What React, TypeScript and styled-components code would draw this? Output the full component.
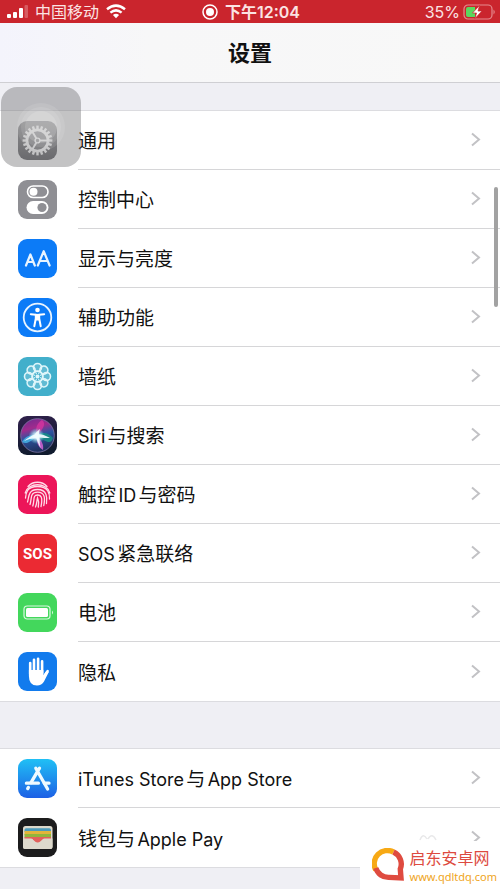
import React from "react";
import styled, { createGlobalStyle } from "styled-components";

const GlobalStyle = createGlobalStyle`
  * { box-sizing: border-box; }
  body {
    margin: 0;
    background: #efeff4;
    color: #111;
    font-family: Inter, "Noto Sans CJK SC", sans-serif;
  }
`;

const Page = styled.div`
  position: relative;
  min-height: 100vh;
  overflow: hidden;
`;

const StatusBar = styled.header`
  display: grid;
  grid-template-columns: 1fr auto 1fr;
  align-items: center;
  height: 23px;
  padding: 0 4px 0 6px;
  background: #ca252d;
  color: #fbe3e3;
  font-size: 16px;
  line-height: 22px;
`;

const StatusGroup = styled.div<{ $end?: boolean; $strong?: boolean }>`
  display: flex;
  align-items: center;
  justify-content: ${(p) => (p.$end ? "flex-end" : "flex-start")};
  gap: ${(p) => (p.$end ? 3 : 7)}px;
  font-weight: ${(p) => (p.$strong ? 600 : 400)};
  white-space: nowrap;
`;

const NavBar = styled.div`
  display: flex;
  align-items: center;
  justify-content: center;
  height: 60px;
  border-bottom: 1px solid #cfcfd3;
  background: linear-gradient(90deg, #f4f4fc, #f7f7f8 30%, #f8f8f8);
`;

const Title = styled.h1`
  margin: 0;
  font-size: 22px;
  line-height: 30px;
  font-weight: 600;
`;

const Group = styled.ul<{ $first?: boolean }>`
  margin: ${(p) => (p.$first ? 28 : 48)}px 0 0;
  padding: 0;
  list-style: none;
  background: #fff;
  box-shadow: 0 -1px #dcdce0, 0 1px #dcdce0;
`;

const Row = styled.a`
  display: flex;
  align-items: center;
  height: 59px;
  padding-left: 18px;
  gap: 21px;
  color: inherit;
  text-decoration: none;
`;

const RowBody = styled.span<{ $last?: boolean }>`
  display: flex;
  flex: 1;
  align-items: center;
  justify-content: space-between;
  height: 59px;
  padding-right: 19px;
  border-bottom: ${(p) => (p.$last ? "0" : "1px solid #d6d6d8")};
`;

const Label = styled.span`
  padding-top: 4px;
  font-size: 19px;
  line-height: 28px;
  white-space: nowrap;
  text-autospace: normal;
`;

const Latin = styled.span`
  font-size: 18px;
`;

const AssistiveTouch = styled.button`
  position: absolute;
  top: 87px;
  left: 1px;
  width: 80px;
  height: 80px;
  padding: 0;
  border: 0;
  border-radius: 16px;
  background: rgba(105, 105, 108, 0.4);
`;

const ScrollThumb = styled.div`
  position: absolute;
  top: 187px;
  right: 2px;
  width: 4px;
  height: 120px;
  border-radius: 2px;
  background: #a2a2a2;
`;

const FaintMark = styled.svg`
  position: absolute;
  right: 62px;
  bottom: 48px;
`;

const Brand = styled.a`
  position: absolute;
  right: 0;
  bottom: 0;
  display: flex;
  align-items: center;
  gap: 5px;
  height: 48px;
  padding: 0 3px 0 12px;
  border-top-left-radius: 4px;
  background: #fff;
  text-decoration: none;
`;

const BrandText = styled.span`
  display: flex;
  flex-direction: column;
`;

const BrandName = styled.span`
  color: #dd4a40;
  font-family: "Noto Sans CJK SC", sans-serif;
  font-size: 16px;
  line-height: 24px;
`;

const BrandUrl = styled.span`
  color: #efa51c;
  font-family: "Noto Sans", sans-serif;
  font-size: 11px;
  line-height: 16px;
`;

const AppIcon = styled.svg`
  display: block;
  flex: none;
  width: 39px;
  height: 39px;
`;

type IconProps = { fill: string; children?: React.ReactNode };

const Tile = ({ fill, children }: IconProps) => (
  <AppIcon viewBox="0 0 39 39" aria-hidden="true">
    <rect width="39" height="39" rx="9" fill={fill} />
    {children}
  </AppIcon>
);

const steps = (n: number) => Array.from({ length: n }, (_, i) => (i * 360) / n);

const GearIcon = () => (
  <Tile fill="url(#gear)">
    <defs>
      <linearGradient id="gear" x2="0" y2="1">
        <stop stopColor="#a2a2a4" />
        <stop offset="1" stopColor="#6c6c70" />
      </linearGradient>
    </defs>
    <g stroke="#fff" fill="none">
      <circle cx="19.5" cy="19.5" r="10.6" strokeWidth="2.8" />
      <circle cx="19.5" cy="19.5" r="2.4" strokeWidth="1.4" />
      {steps(20).map((a) => (
        <path key={a} d="M19.5 8.5V4.6" strokeWidth="2.4" transform={`rotate(${a} 19.5 19.5)`} />
      ))}
      {[90, 210, 330].map((a) => (
        <path key={a} d="M19.5 17V9" strokeWidth="1.9" transform={`rotate(${a} 19.5 19.5)`} />
      ))}
    </g>
  </Tile>
);

const ControlIcon = () => (
  <Tile fill="#8f8f94">
    <rect x="9.5" y="6" width="20.5" height="11.5" rx="5.75" fill="none" stroke="#fff" strokeWidth="1.6" />
    <circle cx="15.5" cy="11.7" r="4" fill="#fff" />
    <rect x="8.5" y="21" width="22" height="13" rx="6.5" fill="#fff" />
    <circle cx="24" cy="27.5" r="4.6" fill="#8f8f94" />
  </Tile>
);

const DisplayIcon = () => (
  <Tile fill="#0c7bf7">
    <g fill="none" stroke="#e8f4ff" strokeWidth="2.2" strokeLinecap="round" strokeLinejoin="round">
      <path d="M8 26.5L12.4 15.5L16.8 26.5M9.5 23H15.3" />
      <path d="M19.8 26.5L25.7 12.2L31.6 26.5M21.7 22H29.7" />
    </g>
  </Tile>
);

const AccessIcon = () => (
  <Tile fill="#0c7bf7">
    <circle cx="19.5" cy="19.5" r="13.8" fill="none" stroke="#e8f4ff" strokeWidth="1.8" />
    <circle cx="19.5" cy="12" r="2.3" fill="#fff" />
    <path d="M12.8 16.2L17.8 16.8V20.5L16.3 28.3M26.2 16.2L21.2 16.8V20.5L22.7 28.3" fill="none" stroke="#fff" strokeWidth="2" strokeLinecap="round" strokeLinejoin="round" />
    <path d="M17 15.9H22V22.5H17Z" fill="#fff" />
  </Tile>
);

const WallpaperIcon = () => (
  <Tile fill="#42afcb">
    <g fill="none" stroke="#dff6fa" strokeWidth="1.6">
      {steps(8).map((a) => (
        <circle key={a} cx="19.5" cy="10.5" r="4" fill="rgba(255,255,255,.16)" transform={`rotate(${a} 19.5 19.5)`} />
      ))}
      <circle cx="19.5" cy="19.5" r="5.6" strokeWidth="1.2" />
      <circle cx="19.5" cy="19.5" r="2" fill="#dff6fa" stroke="none" />
      {steps(8).map((a) => (
        <path key={a} d="M19.5 17V13" strokeWidth="1" transform={`rotate(${a + 22.5} 19.5 19.5)`} />
      ))}
    </g>
  </Tile>
);

const SiriIcon = () => (
  <Tile fill="url(#siriBase)">
    <defs>
      <linearGradient id="siriBase" x2="0.2" y2="1">
        <stop stopColor="#30214c" />
        <stop offset="1" stopColor="#101b2e" />
      </linearGradient>
      <linearGradient id="siriOrb" x2="0.3" y2="1">
        <stop stopColor="#6c2b91" />
        <stop offset=".35" stopColor="#a02b8d" />
        <stop offset=".6" stopColor="#2c55a0" />
        <stop offset="1" stopColor="#203260" />
      </linearGradient>
      <radialGradient id="siriGlow">
        <stop stopColor="#fff" />
        <stop offset=".35" stopColor="#d7f6ff" stopOpacity=".85" />
        <stop offset="1" stopColor="#7ee" stopOpacity="0" />
      </radialGradient>
    </defs>
    <circle cx="19.5" cy="19.5" r="16.8" fill="url(#siriOrb)" stroke="#7e75a4" strokeWidth=".8" />
    <path d="M19 20C25 15 30 17 35 22C33 29 28 26 19 20Z" fill="#178f86" opacity=".85" />
    <path d="M19 20C12 18 7 21 4 26C9 29 13 25 19 20Z" fill="#49b8e8" opacity=".8" />
    <path d="M19 20C17 14 18 8 24 4C29 8 24 14 19 20Z" fill="#d636a0" opacity=".8" />
    <path d="M19 20C18 26 20 31 25 34C26 28 23 24 19 20Z" fill="#b85cc5" />
    <circle cx="18.5" cy="20" r="8" fill="url(#siriGlow)" />
    <path d="M6 25Q12 20 16.5 18.8Q18 16 22 13Q20.5 16.5 21 18.3Q26 18.5 32 22Q26 22 21.5 21.5Q21.5 27 22.5 32Q19.5 26 18.3 22.3Q12 22 6 25Z" fill="#f2fdff" opacity=".92" />
  </Tile>
);

const TouchIcon = () => (
  <Tile fill="#ec1559">
    <g fill="none" stroke="#ffdce8" strokeWidth="1.3" strokeLinecap="round">
      <path d="M10 11.5C15 5.8 24 5.8 29 11.5" />
      <path d="M7.2 18C10 7 29 7 31.8 18" />
      <path d="M7.5 23C8 18 8.5 11.5 19.5 11.5S31.8 19 31.5 24" />
      <path d="M9.5 27C11 23 9.5 14.5 19.5 14.5S29.2 23 28.5 28.5" />
      <path d="M12 29.5C14 24 11.5 17.2 19.5 17.2S27 24 25.8 30.5" />
      <path d="M14.8 31C16.8 25 14.5 20 19.5 20S24.3 25 23 31.5" />
      <path d="M17.5 32C19 28 18.7 26 19.5 22.8C21 26 21 29 20.3 32" />
    </g>
  </Tile>
);

const SosText = styled.text`
  font-family: "Liberation Sans Narrow", Roboto, sans-serif;
  font-size: 15px;
  font-weight: 700;
`;

const SosIcon = () => (
  <Tile fill="#eb2a33">
    <SosText x="19.5" y="25" textAnchor="middle" fill="#fff">SOS</SosText>
  </Tile>
);

const PowerIcon = () => (
  <Tile fill="#43d75c">
    <rect x="6" y="13" width="26" height="13" rx="3.2" fill="none" stroke="#d9f8df" strokeWidth="1.2" />
    <rect x="8" y="15" width="22" height="9" rx="1.5" fill="#fff" />
    <path d="M34 17.5Q36 19.5 34 21.5Z" fill="#d9f8df" />
  </Tile>
);

const HandIcon = () => (
  <Tile fill="#127bed">
    <g fill="none" stroke="#fff" strokeWidth="2.6" strokeLinecap="round">
      <path d="M12.2 22V11M16 20V7.8M20.1 20V6.8M24.1 21V9.4" />
      <path d="M25 26L29.6 19.2" />
    </g>
    <path d="M10.9 18H25.4V23.2L28.4 18.8L30.8 20L26 29.5Q23.7 33.5 19 33.5Q10.9 33.5 10.9 24Z" fill="#fff" />
  </Tile>
);

const StoreIcon = () => (
  <Tile fill="url(#store)">
    <defs>
      <linearGradient id="store" x2="0" y2="1">
        <stop stopColor="#20c0f5" />
        <stop offset="1" stopColor="#1d60e5" />
      </linearGradient>
    </defs>
    <g stroke="#effaff" strokeWidth="3.3" strokeLinecap="round" fill="none">
      <path d="M17.8 9.2L29.6 30M21.5 9.2L13 23.6M10.4 28.4L9.7 29.6" />
      <path d="M8.4 24.2H20.4M26.3 24.2H31" />
    </g>
  </Tile>
);

const WalletIcon = () => (
  <Tile fill="#1c1c1d">
    <rect x="5" y="8" width="29.5" height="23" rx="2.5" fill="#ddd9cc" />
    <path d="M6.5 12Q6.5 10.3 8.2 10.3H31.3Q33 10.3 33 12V14H6.5Z" fill="#4c9bbb" />
    <path d="M6.5 13H33V17H6.5Z" fill="#e2b53a" />
    <path d="M6.5 16H33V19.5H6.5Z" fill="#91b63b" />
    <path d="M6.5 19H33V22H6.5Z" fill="#e2605b" />
    <path d="M5 20.6H13.2C15.8 20.6 15.7 24.4 19.7 24.4S23.6 20.6 26.2 20.6H34.5V29Q34.5 31 32.5 31H7Q5 31 5 29Z" fill="#ddd9cc" />
    <path d="M13.2 20.6C15.8 20.6 15.7 24.4 19.7 24.4S23.6 20.6 26.2 20.6Z" fill="#e2605b" />
  </Tile>
);

const Chevron = () => (
  <svg width="11" height="16" viewBox="0 0 11 16" aria-hidden="true">
    <path d="M2 1.5L9 7.5L2 13.5" fill="none" stroke="#c2c2c5" strokeWidth="2" />
  </svg>
);

const Signal = () => (
  <svg width="22" height="14" viewBox="0 0 22 14" aria-label="信号">
    <g fill="#fff">
      <rect x="1" y="9" width="4" height="4" rx="1" />
      <rect x="7" y="7" width="4" height="6" rx="1" />
      <rect x="13" y="3" width="4" height="10" rx="1" />
      <rect x="18.5" y="0" width="3.5" height="13" rx="1" opacity=".25" />
    </g>
  </svg>
);

const Wifi = () => (
  <svg width="20" height="15" viewBox="0 0 20 15" aria-label="Wi-Fi">
    <g fill="none" stroke="#fff" strokeWidth="2.5">
      <path d="M1 5.2Q10-2 19 5.2" />
      <path d="M4.4 8.6Q10 4.1 15.6 8.6" />
    </g>
    <path d="M6.9 11Q10 8.3 13.1 11L10 14.3Z" fill="#fff" />
  </svg>
);

const Recording = () => (
  <svg width="16" height="16" viewBox="0 0 16 16" aria-label="录制">
    <circle cx="8" cy="8" r="7" fill="none" stroke="#fff" strokeWidth="1.5" />
    <circle cx="8" cy="8" r="4" fill="#fff" />
  </svg>
);

const Charge = () => (
  <svg width="33" height="16" viewBox="0 0 33 16" aria-label="充电中">
    <rect x="1" y="1" width="28" height="14" rx="4" fill="none" stroke="#e58b8f" strokeWidth="1.2" />
    <path d="M5 3H12V13H5Q3 13 3 11V5Q3 3 5 3Z" fill="#5bd75e" />
    <path d="M30.5 5.5Q33 8 30.5 10.5Z" fill="#e58b8f" />
    <path d="M16.5 1.5L9.5 9H13.5L12 14.5L19 7H15Z" fill="#fff" stroke="#ca252d" strokeWidth=".7" />
  </svg>
);

const BrandMark = () => (
  <svg width="33" height="34" viewBox="0 0 33 34" aria-hidden="true">
    <g fill="none" strokeWidth="5.4">
      <path d="M3.8 22A13.2 13.2 0 0 1 21.5 4" stroke="#f7a915" />
      <path d="M21.5 4A13.2 13.2 0 0 1 28.3 21L29 30L17 29.4A13.2 13.2 0 0 1 3.8 20" stroke="#df4b40" />
    </g>
  </svg>
);

type Item = { name: string; Icon: () => React.JSX.Element };

const system: Item[] = [
  { name: "通用", Icon: GearIcon },
  { name: "控制中心", Icon: ControlIcon },
  { name: "显示与亮度", Icon: DisplayIcon },
  { name: "辅助功能", Icon: AccessIcon },
  { name: "墙纸", Icon: WallpaperIcon },
  { name: "Siri与搜索", Icon: SiriIcon },
  { name: "触控ID与密码", Icon: TouchIcon },
  { name: "SOS紧急联络", Icon: SosIcon },
  { name: "电池", Icon: PowerIcon },
  { name: "隐私", Icon: HandIcon },
];

const services: Item[] = [
  { name: "iTunes Store与App Store", Icon: StoreIcon },
  { name: "钱包与Apple Pay", Icon: WalletIcon },
];

const MixedText = ({ text }: { text: string }) => (
  <>
    {text
      .split(/([A-Za-z ]+)/)
      .filter(Boolean)
      .map((part, i) => (/[A-Za-z]/.test(part) ? <Latin key={i}>{part}</Latin> : part))}
  </>
);

const SettingsGroup = ({ items, first }: { items: Item[]; first?: boolean }) => (
  <Group $first={first}>
    {items.map(({ name, Icon }, i) => (
      <li key={name}>
        <Row href="#">
          <Icon />
          <RowBody $last={i === items.length - 1}>
            <Label>
              <MixedText text={name} />
            </Label>
            <Chevron />
          </RowBody>
        </Row>
      </li>
    ))}
  </Group>
);

export default function App() {
  return (
    <Page>
      <GlobalStyle />
      <StatusBar>
        <StatusGroup>
          <Signal />
          <span>中国移动</span>
          <Wifi />
        </StatusGroup>
        <StatusGroup $strong>
          <Recording />
          <span>下午12:04</span>
        </StatusGroup>
        <StatusGroup $end>
          <span>35%</span>
          <Charge />
        </StatusGroup>
      </StatusBar>
      <NavBar>
        <Title>设置</Title>
      </NavBar>
      <main>
        <SettingsGroup items={system} first />
        <SettingsGroup items={services} />
      </main>
      <AssistiveTouch aria-label="辅助触控">
        <svg width="80" height="80" viewBox="0 0 80 80" aria-hidden="true">
          <g fill="#fff">
            <circle cx="40" cy="40" r="24" opacity=".1" />
            <circle cx="40" cy="40" r="20" opacity=".1" />
            <circle cx="40" cy="40" r="16" opacity=".14" />
          </g>
        </svg>
      </AssistiveTouch>
      <ScrollThumb />
      <FaintMark width="20" height="8" viewBox="0 0 20 8" aria-hidden="true">
        <path d="M2 7Q5-1 9 6M10 6Q14-1 18 7" fill="none" stroke="#e9e9ea" strokeWidth="1.5" />
      </FaintMark>
      <Brand href="#">
        <BrandMark />
        <BrandText>
          <BrandName>启东安卓网</BrandName>
          <BrandUrl>www.qdltdq.com</BrandUrl>
        </BrandText>
      </Brand>
    </Page>
  );
}
